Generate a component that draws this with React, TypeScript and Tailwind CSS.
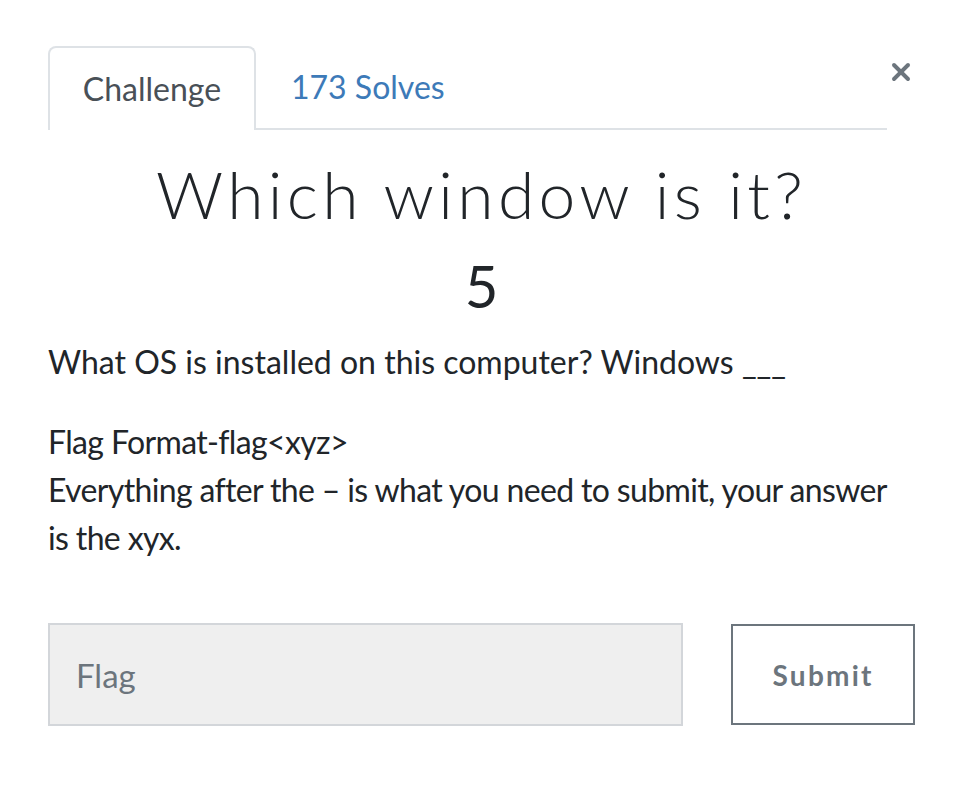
import { X } from 'lucide-react';

export default function App() {
  return (
    <div className="min-h-[798px] w-[954px] bg-white font-['Lato','Liberation_Sans',sans-serif] text-[#212529]">
      <div className="pl-12 pr-[39px] pt-[46px]">
        <div className="flex items-start">
          <div className="flex flex-1 border-b-2 border-[#dee2e6]">
            <div className="-mb-[2px] flex h-[84px] w-[208px] items-center justify-center rounded-t-lg border-2 border-b-0 border-[#dee2e6] bg-white text-[32px] text-[#495057]">
              Challenge
            </div>
            <div className="flex h-[82px] items-center pl-[35px] text-[32px] text-[#3d7ab8]">173 Solves</div>
          </div>
          <button className="ml-0 mt-[10px] flex h-8 w-7 items-center justify-center text-[#6c757d]">
            <X size={32} strokeWidth={3.4} />
          </button>
        </div>

        <h2 className="mt-[24px] text-center text-[66px] font-light leading-[80px] tracking-[0.065em]">
          Which window is it?
        </h2>
        <h3 className="mt-[20px] text-center text-[58px] leading-[64px]">5</h3>

        <div className="mt-[20px] text-[32px] leading-[48px]">
          <p>What OS is installed on this computer? Windows ___</p>
          <p className="mt-[32px] tracking-[-0.02em]">Flag Format-flag&lt;xyz&gt;</p>
          <p className="max-w-[850px] tracking-[-0.02em]">
            Everything after the – is what you need to submit, your answer is the xyx.
          </p>
        </div>

        <div className="mt-[61px] flex items-center">
          <input
            placeholder="Flag"
            className="h-[103px] w-[636px] border-2 border-[#d3d6da] bg-[#efefef] px-[26px] text-[33px] text-[#495057] outline-none placeholder:text-[#6c757d]"
          />
          <button className="ml-[48px] h-[101px] w-[184px] border-2 border-[#6c757d] text-[28px] font-bold tracking-[0.08em] text-[#6c757d]">
            Submit
          </button>
        </div>
      </div>
    </div>
  );
}
